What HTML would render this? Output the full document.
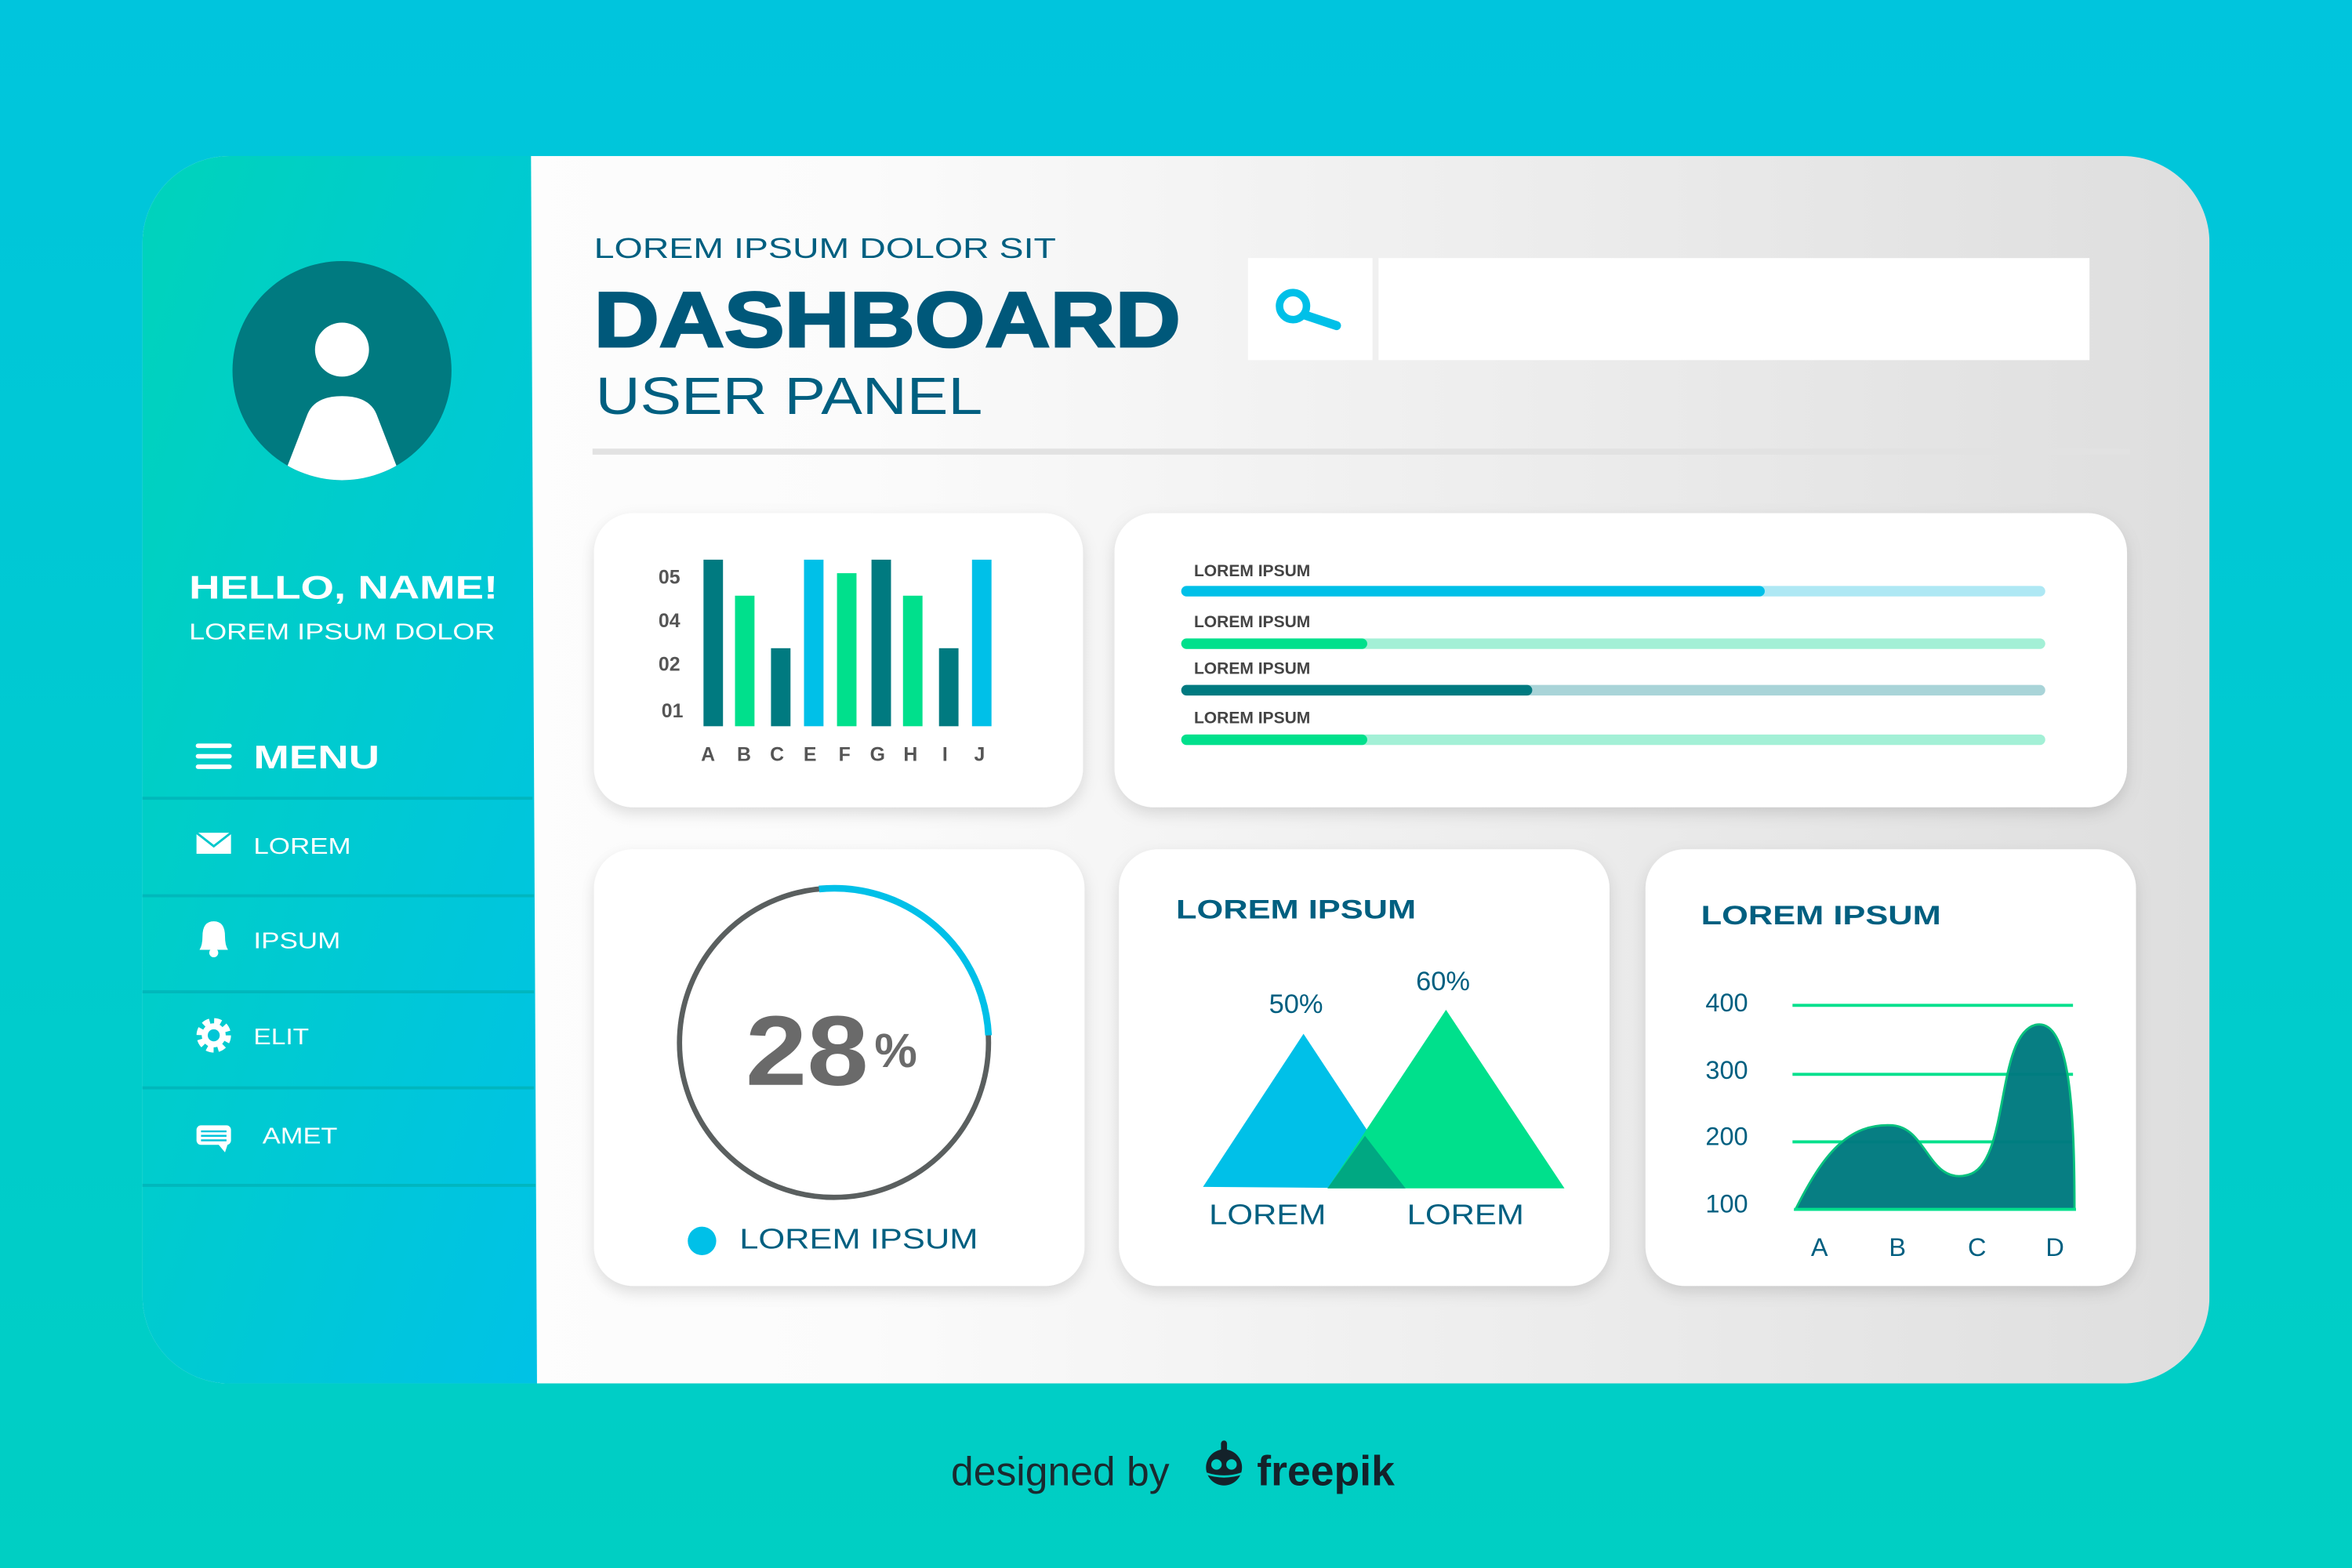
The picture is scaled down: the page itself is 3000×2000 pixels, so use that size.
<!DOCTYPE html>
<html><head><meta charset="utf-8"><style>html,body{margin:0;padding:0;overflow:hidden;background:#00c8d4}svg{display:block}</style></head>
<body>
<svg width="3000" height="2000" viewBox="0 0 1568 1045" preserveAspectRatio="none" xmlns="http://www.w3.org/2000/svg" font-family="Liberation Sans, sans-serif">
<defs>
<linearGradient id="bg" x1="0" y1="0" x2="0" y2="1"><stop offset="0" stop-color="#00c5dd"/><stop offset="1" stop-color="#00cfc3"/></linearGradient>
<linearGradient id="side" x1="0" y1="0" x2="1" y2="1"><stop offset="0" stop-color="#00d3bb"/><stop offset="1" stop-color="#00c2e6"/></linearGradient>
<linearGradient id="main" x1="0" y1="0" x2="1" y2="0"><stop offset="0" stop-color="#ffffff"/><stop offset="0.35" stop-color="#fbfbfb"/><stop offset="1" stop-color="#dedede"/></linearGradient>
<clipPath id="cardclip"><rect x="95" y="104" width="1378" height="818" rx="58"/></clipPath>
<clipPath id="av"><circle cx="228" cy="247" r="73"/></clipPath>
<filter id="sh" x="-10%" y="-10%" width="120%" height="130%"><feDropShadow dx="0" dy="4" stdDeviation="5" flood-color="#000" flood-opacity="0.13"/></filter>
</defs>
<rect width="1568" height="1045" fill="url(#bg)"/>
<g clip-path="url(#cardclip)">
<rect x="95" y="104" width="1378" height="818" fill="url(#main)"/>
<polygon points="95,104 354,104 358,922 95,922" fill="url(#side)"/>
</g>
<!-- avatar -->
<circle cx="228" cy="247" r="73" fill="#007a80"/>
<g clip-path="url(#av)" fill="#fff">
<ellipse cx="228" cy="233" rx="18" ry="18"/>
<path d="M188,320 L205,276 Q210,264 228,264 Q246,264 251,276 L268,320 Z"/>
</g>
<text x="126" y="399" fill="#fff" font-size="22" font-weight="bold" textLength="206" lengthAdjust="spacingAndGlyphs">HELLO, NAME!</text>
<text x="126" y="426" fill="#fff" font-size="15" textLength="204" lengthAdjust="spacingAndGlyphs">LOREM IPSUM DOLOR</text>
<g stroke="#fff" stroke-width="3" stroke-linecap="round"><line x1="132" y1="497" x2="153" y2="497"/><line x1="132" y1="504" x2="153" y2="504"/><line x1="132" y1="511" x2="153" y2="511"/></g>
<text x="169" y="512" fill="#fff" font-size="22" font-weight="bold" textLength="84" lengthAdjust="spacingAndGlyphs">MENU</text>
<g stroke="#00b3b8" stroke-width="2" opacity="0.8">
<line x1="95" y1="532" x2="355" y2="532"/><line x1="95" y1="597" x2="356" y2="597"/><line x1="95" y1="661" x2="356" y2="661"/><line x1="95" y1="725" x2="356" y2="725"/><line x1="95" y1="790" x2="357" y2="790"/>
</g>
<!-- icons -->
<rect x="131" y="555" width="23" height="14" fill="#fff"/><polyline points="131,555 142.5,564 154,555" fill="none" stroke="#00c8cc" stroke-width="1.5"/>
<text x="169" y="569" fill="#fff" font-size="15" textLength="65" lengthAdjust="spacingAndGlyphs">LOREM</text>
<path d="M133,633 Q135,630 135,624 Q135,614 142.5,614 Q150,614 150,624 Q150,630 152,633 Z" fill="#fff"/><circle cx="142.5" cy="635" r="3" fill="#fff"/>
<text x="169" y="632" fill="#fff" font-size="15" textLength="58" lengthAdjust="spacingAndGlyphs">IPSUM</text>
<circle cx="142.5" cy="690" r="9" fill="none" stroke="#fff" stroke-width="5" stroke-dasharray="4.3 2.8"/><circle cx="142.5" cy="690" r="8" fill="#fff"/><circle cx="142.5" cy="690" r="4" fill="#00c6d6"/>
<text x="169" y="696" fill="#fff" font-size="15" textLength="37" lengthAdjust="spacingAndGlyphs">ELIT</text>
<rect x="131" y="750" width="23" height="13" rx="3" fill="#fff"/><polygon points="145,762 152,762 150,768" fill="#fff"/>
<g stroke="#00c4dc" stroke-width="1.3"><line x1="134" y1="754" x2="151" y2="754"/><line x1="134" y1="757" x2="151" y2="757"/><line x1="134" y1="760" x2="151" y2="760"/></g>
<text x="175" y="762" fill="#fff" font-size="15" textLength="50" lengthAdjust="spacingAndGlyphs">AMET</text>
<!-- header -->
<text x="396" y="172" fill="#005f80" font-size="19" textLength="308" lengthAdjust="spacingAndGlyphs">LOREM IPSUM DOLOR SIT</text>
<text x="396" y="231" fill="#00587a" font-size="52" font-weight="900" textLength="391" lengthAdjust="spacingAndGlyphs" stroke="#00587a" stroke-width="1.5">DASHBOARD</text>
<text x="397" y="276" fill="#005f80" font-size="35" textLength="258" lengthAdjust="spacingAndGlyphs">USER PANEL</text>
<rect x="832" y="172" width="83" height="68" fill="#fff"/>
<rect x="919" y="172" width="474" height="68" fill="#fff"/>
<circle cx="862" cy="204" r="9" fill="none" stroke="#00c0e8" stroke-width="5"/>
<line x1="870" y1="210" x2="891" y2="217" stroke="#00c0e8" stroke-width="6" stroke-linecap="round"/>
<rect x="395" y="299" width="1025" height="4" fill="#e2e2e2"/>
<!-- cards -->
<g fill="#fff" filter="url(#sh)">
<rect x="396" y="342" width="326" height="196" rx="26"/>
<rect x="743" y="342" width="675" height="196" rx="26"/>
<rect x="396" y="566" width="327" height="291" rx="26"/>
<rect x="746" y="566" width="327" height="291" rx="26"/>
<rect x="1097" y="566" width="327" height="291" rx="26"/>
</g>
<!-- bar chart -->
<g font-size="13" font-weight="bold" fill="#555">
<text x="439" y="389">05</text><text x="439" y="418">04</text><text x="439" y="447">02</text><text x="441" y="478">01</text>
</g>
<rect x="469" y="373" width="13" height="111" fill="#007a80"/>
<rect x="490" y="397" width="13" height="87" fill="#00e08c"/>
<rect x="514" y="432" width="13" height="52" fill="#007a80"/>
<rect x="536" y="373" width="13" height="111" fill="#00c0e8"/>
<rect x="558" y="382" width="13" height="102" fill="#00e08c"/>
<rect x="581" y="373" width="13" height="111" fill="#007a80"/>
<rect x="602" y="397" width="13" height="87" fill="#00e08c"/>
<rect x="626" y="432" width="13" height="52" fill="#007a80"/>
<rect x="648" y="373" width="13" height="111" fill="#00c0e8"/>
<g font-size="13" font-weight="bold" fill="#555" text-anchor="middle">
<text x="472" y="507">A</text><text x="496" y="507">B</text><text x="518" y="507">C</text><text x="540" y="507">E</text><text x="563" y="507">F</text><text x="585" y="507">G</text><text x="607" y="507">H</text><text x="630" y="507">I</text><text x="653" y="507">J</text>
</g>
<!-- progress -->
<g font-size="11" font-weight="bold" fill="#444">
<text x="796" y="384">LOREM IPSUM</text><text x="796" y="418">LOREM IPSUM</text><text x="796" y="449">LOREM IPSUM</text><text x="796" y="482">LOREM IPSUM</text>
</g>
<g stroke-linecap="round" stroke-width="7">
<line x1="791" y1="394" x2="1360" y2="394" stroke="#aee8f4"/><line x1="791" y1="394" x2="1173" y2="394" stroke="#00c0e8"/>
<line x1="791" y1="429" x2="1360" y2="429" stroke="#a3f0d6"/><line x1="791" y1="429" x2="908" y2="429" stroke="#00e08c"/>
<line x1="791" y1="460" x2="1360" y2="460" stroke="#a9d4d8"/><line x1="791" y1="460" x2="1018" y2="460" stroke="#007a80"/>
<line x1="791" y1="493" x2="1360" y2="493" stroke="#a3f0d6"/><line x1="791" y1="493" x2="908" y2="493" stroke="#00e08c"/>
</g>
<!-- donut -->
<circle cx="556" cy="695" r="103" fill="none" stroke="#5a5f5f" stroke-width="3.5"/>
<path d="M546,592.5 A103,103 0 0 1 659,690" fill="none" stroke="#00c0e8" stroke-width="4.5"/>
<text x="497" y="723" font-size="66" font-weight="bold" fill="#6a6a6a" textLength="82" lengthAdjust="spacingAndGlyphs">28</text>
<text x="583" y="711" font-size="32" font-weight="bold" fill="#6a6a6a">%</text>
<circle cx="468" cy="827" r="9.5" fill="#00c0e8"/>
<text x="493" y="832" font-size="19" fill="#005f80" textLength="159" lengthAdjust="spacingAndGlyphs">LOREM IPSUM</text>
<!-- triangles -->
<text x="784" y="612" font-size="18" font-weight="bold" fill="#005f80" textLength="160" lengthAdjust="spacingAndGlyphs">LOREM IPSUM</text>
<text x="846" y="675" font-size="18" fill="#005f80">50%</text>
<text x="944" y="660" font-size="18" fill="#005f80">60%</text>
<polygon points="869,689 802,791 937,792" fill="#00c0e8"/>
<polygon points="964,673 885,792 1043,792" fill="#00e08c"/>
<polygon points="910,757 885,792 937,792" fill="#00a882"/>
<text x="806" y="816" font-size="19" fill="#005f80" textLength="78" lengthAdjust="spacingAndGlyphs">LOREM</text>
<text x="938" y="816" font-size="19" fill="#005f80" textLength="78" lengthAdjust="spacingAndGlyphs">LOREM</text>
<!-- area -->
<text x="1134" y="616" font-size="18" font-weight="bold" fill="#005f80" textLength="160" lengthAdjust="spacingAndGlyphs">LOREM IPSUM</text>
<g font-size="17" fill="#005f80">
<text x="1137" y="674">400</text><text x="1137" y="719">300</text><text x="1137" y="763">200</text><text x="1137" y="808">100</text>
</g>
<g stroke="#00e08c" stroke-width="2"><line x1="1195" y1="670" x2="1382" y2="670"/><line x1="1195" y1="716" x2="1382" y2="716"/><line x1="1195" y1="761" x2="1382" y2="761"/></g>
<path d="M1197,806 C1215,770 1232,748 1262,750 C1285,752 1286,790 1312,783 C1340,776 1330,690 1357,683 C1380,678 1383,740 1383,806 Z" fill="#007a80" stroke="#00c07a" stroke-width="1.5" opacity="0.97"/>
<line x1="1196" y1="806" x2="1384" y2="806" stroke="#00e08c" stroke-width="2"/>
<g font-size="17" fill="#005f80" text-anchor="middle">
<text x="1213" y="837">A</text><text x="1265" y="837">B</text><text x="1318" y="837">C</text><text x="1370" y="837">D</text>
</g>
<!-- footer -->
<text x="634" y="990" font-size="27" fill="#1a2a2f">designed by</text>
<g fill="#14222a">
<circle cx="816" cy="978" r="12"/>
<circle cx="811" cy="976" r="3.5" fill="#00cfc3"/><circle cx="821" cy="976" r="3.5" fill="#00cfc3"/>
<path d="M804,982 Q816,986 828,982" stroke="#00cfc3" stroke-width="1.5" fill="none"/>
<rect x="814" y="962" width="4" height="5"/><circle cx="816" cy="962" r="2"/>
</g>
<text x="838" y="990" font-size="28" font-weight="bold" fill="#14222a">freepik</text>
</svg>
</body></html>
